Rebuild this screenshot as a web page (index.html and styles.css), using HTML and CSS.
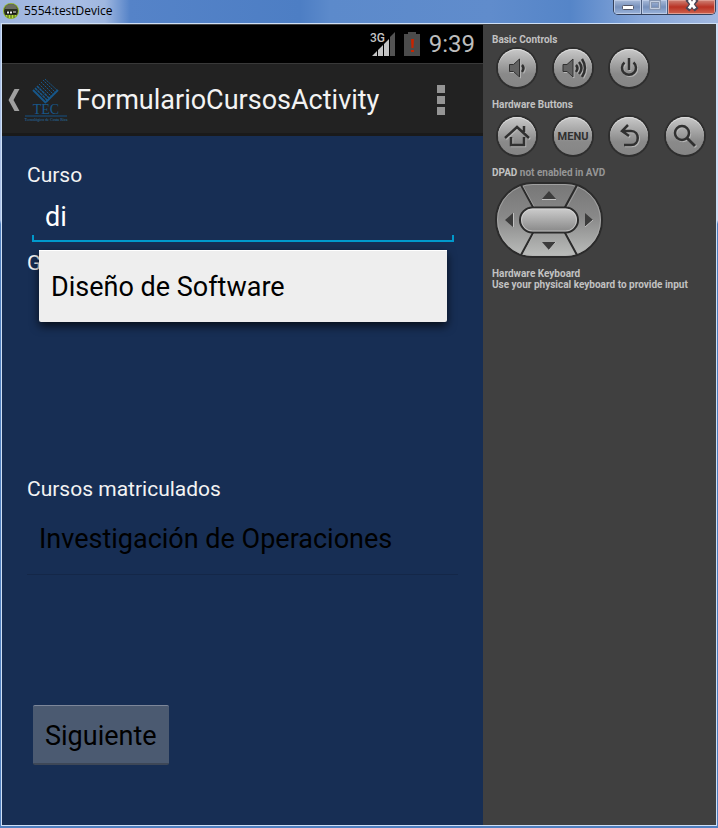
FILE: index.html
```html
<!DOCTYPE html>
<html lang="es">
<head>
<meta charset="utf-8">
<meta name="viewport" content="width=device-width, initial-scale=1">
<title>5554:testDevice</title>
<link rel="stylesheet" href="styles.css">
</head>
<body>
<header class="titlebar">
  <svg class="app-icon" viewBox="0 0 16 16" aria-hidden="true">
    <circle cx="8" cy="8" r="8" fill="#8fb32b"/>
    <circle cx="8" cy="8" r="7" fill="#2a2f20"/>
    <path d="M2 6a6 5 0 0 1 12 0z" fill="#6a6d62"/>
    <path d="M3 8h10v3H3z" fill="#15180f"/>
    <path d="M4 8.500h2v2H4zM7 8.500h2v2H7zM10 8.500h3v1h-3z" fill="#f4f4f4"/>
    <path d="M2.500 12h11l-2 3h-7z" fill="#b5e03a"/>
    <path d="M5 12v3M8 12v3M11 12v3" stroke="#414f17"/>
  </svg>
  <h1 class="window-title">5554:testDevice</h1>
  <div class="window-controls">
    <button class="win-btn minimize" aria-label="Minimizar">
      <svg viewBox="0 0 16 12" aria-hidden="true"><rect x="2.500" y="5.500" width="11" height="4" rx="1" fill="#fff" stroke="#535666"/></svg>
    </button>
    <button class="win-btn maximize" aria-label="Maximizar" disabled>
      <svg viewBox="0 0 16 12" aria-hidden="true"><path d="M3.500 1.500h9v7h-9z" fill="none" stroke="#8796b1" stroke-width="3"/><path d="M3.500 1.500h9v7h-9z" fill="none" stroke="#c3cee0"/></svg>
    </button>
    <button class="win-btn close" aria-label="Cerrar">
      <svg viewBox="0 0 16 12" aria-hidden="true"><path d="M5 1l6 7M11 1L5 8" stroke="#4b4656" stroke-width="5" stroke-linecap="square"/><path d="M5 0l6 8.500M11 0L5 8.500" stroke="#fff" stroke-width="3"/></svg>
    </button>
  </div>
</header>
<main class="window">
  <section class="phone">
    <div class="status-bar">
      <svg class="signal" viewBox="0 0 26 26" aria-hidden="true">
        <path d="M2 25L7 20v5zM8 25v-6l5-5v11zM14 25V13l5-5v17z" fill="#c4c4c4"/>
        <path d="M20 25V6l5-5v24z" fill="#535353"/>
        <text x="0" y="11" class="signal-text">3G</text>
      </svg>
      <svg class="battery" viewBox="0 0 16 24" aria-hidden="true">
        <path d="M0 2h4V0h8v2h4v22H0z" fill="#4b4b4b"/>
        <path d="M7 7h3l-.5 9h-2zM7 18h3v2H7z" fill="#c62400"/>
      </svg>
      <time class="clock">9:39</time>
    </div>
    <div class="action-bar">
      <button class="up" aria-label="Volver">
        <svg class="chevron" viewBox="0 0 12 22" aria-hidden="true"><path d="M11.500 0H6.500L.5 11l6 11h5l-6-11z" fill="#a0a0a0"/></svg>
        <svg class="logo" viewBox="0 0 44 44" aria-hidden="true">
          <g fill="none" stroke="#17578a">
            <path d="M9 12L22 25" stroke-width="2"/>
            <path d="M11 10L24 23M13 8L26 21" stroke-width="1.500" stroke-dasharray="3 .6"/>
            <path d="M15 6L28 19M17 4L30 17M19 2L32 15M21 1L34 13" stroke-dasharray="2 .8"/>
            <path d="M22 24L34 12" stroke-width="2"/>
          </g>
          <text x="22" y="36" class="logo-name">TEC</text>
          <path d="M1 38h42" stroke="#145184"/>
          <text x="22" y="43" class="logo-caption">Tecnológico de Costa Rica</text>
        </svg>
      </button>
      <h2 class="activity-title">FormularioCursosActivity</h2>
      <button class="overflow" aria-label="Más opciones"><i></i><i></i><i></i></button>
    </div>
    <form class="form">
      <label class="label" for="curso">Curso</label>
      <div class="field">
        <input id="curso" class="input" type="text" value="di" autocomplete="off">
        <button type="button" class="suggestion">Diseño de Software</button>
      </div>
      <div class="group">
        <span class="label">G</span>
      </div>
      <h3 class="label">Cursos matriculados</h3>
      <ul class="courses">
        <li class="course">Investigación de Operaciones</li>
      </ul>
      <button type="button" class="next">Siguiente</button>
    </form>
  </section>
  <aside class="controls">
    <h2 class="caption">Basic Controls</h2>
    <div class="keys basic">
      <button class="key" aria-label="Bajar volumen">
        <svg viewBox="0 0 38 38" aria-hidden="true"><path d="M11.500 15.500h4l6-5.500v18l-6-5.500h-4z" class="engrave"/><path d="M24 16q3 3 0 7" class="stroke"/></svg>
      </button>
      <button class="key" aria-label="Subir volumen">
        <svg viewBox="0 0 38 38" aria-hidden="true"><path d="M9 15.500h4l6-5.500v18l-6-5.500H9z" class="engrave"/><path d="M22 16q3 3 0 7M25 13q5 6 0 12M28 10q6 9 0 18" class="stroke"/></svg>
      </button>
      <button class="key" aria-label="Encender">
        <svg viewBox="0 0 38 38" aria-hidden="true"><path d="M14.500 13.500a7 7 0 1 0 9 0M19 9v12" class="stroke"/></svg>
      </button>
    </div>
    <h2 class="caption">Hardware Buttons</h2>
    <div class="keys">
      <button class="key" aria-label="Inicio">
        <svg viewBox="0 0 38 38" aria-hidden="true"><path d="M7 21L19 10l12 11M26 15V9M13 20v8h13v-8" class="stroke"/></svg>
      </button>
      <button class="key key-text">MENU</button>
      <button class="key" aria-label="Atrás">
        <svg viewBox="0 0 38 38" aria-hidden="true"><path d="M18 8l-6 6 7 5M12 14h9c9 0 9 14 0 14h-7" class="stroke"/></svg>
      </button>
      <button class="key" aria-label="Buscar">
        <svg viewBox="0 0 38 38" aria-hidden="true"><circle cx="16" cy="16" r="7" class="stroke"/><path d="M21 21l8 8" class="stroke heavy"/></svg>
      </button>
    </div>
    <h2 class="caption">DPAD <span class="muted">not enabled in AVD</span></h2>
    <svg class="dpad" viewBox="0 0 108 76" role="img" aria-label="DPAD">
      <defs>
        <linearGradient id="pad" x2="0" y2="1"><stop stop-color="#777"/><stop offset=".45" stop-color="#888"/><stop offset="1" stop-color="#bcbebc"/></linearGradient>
        <linearGradient id="center" x2="0" y2="1"><stop stop-color="#cfcfcf"/><stop offset="1" stop-color="#868686"/></linearGradient>
      </defs>
      <rect x="1" y="1" width="106" height="74" rx="37" fill="url(#pad)" stroke="#2b2b2b" stroke-width="2"/>
      <rect x="2.500" y="2.500" width="103" height="71" rx="35.500" fill="none" stroke="#b0b0b0" stroke-opacity=".7"/>
      <path d="M26 3l13 24M82 3L69 27M26 73l13-24M82 73L69 49" stroke="#2b2b2b" stroke-width="2"/>
      <path d="M28 4l12 22M83 5L71 27M28 73l12-23M83 71L71 49" stroke="#b0b0b0" stroke-opacity=".6"/>
      <rect x="25" y="25.500" width="58" height="25" rx="12.500" fill="url(#center)" stroke="#2b2b2b" stroke-width="2"/>
      <rect x="26.500" y="27" width="55" height="22" rx="11" fill="none" stroke="#ddd" stroke-opacity=".6"/>
      <path d="M47 17l7-8 7 8zM47 60l7 8 7-8zM18 31l-8 7 8 7zM90 31l8 7-8 7z" fill="#3c3c3c"/>
      <path d="M47 17.500h14M18.500 31v14M54 68l7-8M90 45l8-7" stroke="#c0c0c0"/>
    </svg>
    <h2 class="caption">Hardware Keyboard</h2>
    <p class="caption">Use your physical keyboard to provide input</p>
  </aside>
</main>
</body>
</html>
```
FILE: styles.css
```css
* {
  box-sizing: border-box;
}

body {
  margin: 0;
  min-height: 100vh;
  display: flex;
  flex-direction: column;
  padding: 0 1px 2px;
  background: linear-gradient(180deg, transparent 220px, #4f7fbf 224px), linear-gradient(90deg, #a9bfe5, #cddcf5);
  font-family: Roboto, "Liberation Sans", sans-serif;
}

button {
  margin: 0;
  padding: 0;
  border: 0;
  background: none;
  color: inherit;
  font: inherit;
}

h1, h2, h3, p, ul {
  margin: 0;
  padding: 0;
  font-weight: 400;
}

.titlebar {
  display: flex;
  align-items: center;
  height: 23px;
  margin: 0 -1px;
  padding: 0 2px 2px 3px;
  background: linear-gradient(90deg, #9db4de 0, #aabfe4 70px, #9fb7e0 105px, #5583c8 130px, #4d7ec4 300px, #5c8acb 330px, #608ccc 490px, #5585c8 570px, #86a6d9 640px, #a2b9e1 100%);
}

.app-icon {
  width: 16px;
  height: 16px;
}

.window-title {
  flex: 1;
  margin-left: 5px;
  font: 12px/20px "Open Sans", "Noto Sans", sans-serif;
  color: #000;
}

.window-controls {
  display: flex;
  align-self: flex-start;
  height: 15px;
  border: 1px solid #34405a;
  border-top: 0;
  border-radius: 0 0 5px 5px;
  overflow: hidden;
}

.win-btn {
  display: flex;
  justify-content: center;
  width: 28px;
  border-right: 1px solid #4c5d7d;
  background: linear-gradient(#a9bbda, #7690bb 50%, #9bb4dc);
  box-shadow: inset 0 0 0 1px #bccbe6;
}

.win-btn svg {
  width: 16px;
  height: 12px;
}

.maximize {
  width: 26px;
}

.close {
  width: 47px;
  border-right: 0;
  background: linear-gradient(#cf8478, #b93324 50%, #d06450);
  box-shadow: inset 0 0 0 1px #df9d91;
}

.window {
  flex: 1;
  display: flex;
  border: 1px solid #cfe0f6;
  background: #404040;
}

.phone {
  flex: 1;
  min-width: 0;
  display: flex;
  flex-direction: column;
  margin-top: 1px;
  background: #172e54;
}

.status-bar {
  display: flex;
  align-items: center;
  justify-content: flex-end;
  height: 38px;
  padding-right: 8px;
  background: #000;
  color: #bdbdbd;
}

.signal {
  width: 26px;
  height: 26px;
  margin-right: 8px;
}

.signal-text {
  font: 500 12px Roboto, sans-serif;
  fill: #c4c4c4;
  stroke: #000;
  stroke-width: 2px;
  paint-order: stroke;
}

.battery {
  width: 16px;
  height: 24px;
  margin-right: 9px;
}

.clock {
  font-size: 24px;
  line-height: 40px;
}

.action-bar {
  display: flex;
  align-items: center;
  height: 73px;
  padding: 0 32px 0 6px;
  border-top: 1px solid #393939;
  background: linear-gradient(#222 69px, #1a1a1a 69px);
  color: #f3f3f3;
}

.up {
  display: flex;
  align-items: center;
}

.chevron {
  width: 12px;
  height: 22px;
  margin-right: 4px;
}

.logo {
  width: 44px;
  height: 44px;
}

.logo-name {
  font: 14px "Liberation Serif", serif;
  fill: #17578a;
  text-anchor: middle;
}

.logo-caption {
  font: 4px "Liberation Serif", serif;
  fill: #2673aa;
  text-anchor: middle;
}

.activity-title {
  flex: 1;
  margin-left: 8px;
  font-size: 27px;
  line-height: 32px;
  white-space: nowrap;
}

.overflow {
  display: grid;
  gap: 3px;
  padding: 0 6px;
}

.overflow i {
  width: 8px;
  height: 8px;
  background: #959595;
}

.form {
  flex: 1;
  display: flex;
  flex-direction: column;
  padding: 26px 25px 60px;
}

.label {
  font-size: 21px;
  line-height: 26px;
  color: #f3f3f3;
}

.field {
  position: relative;
  margin: 0 4px 8px 5px;
}

.input {
  display: block;
  width: 100%;
  height: 54px;
  padding: 4px 13px 0;
  border: 0;
  outline: 0;
  background:
    linear-gradient(#0099cc, #0099cc) left bottom / 2px 7px no-repeat,
    linear-gradient(#0099cc, #0099cc) right bottom / 2px 7px no-repeat,
    linear-gradient(#0099cc, #0099cc) left bottom / 100% 2px no-repeat;
  color: #fff;
  font: 27px/32px Roboto, sans-serif;
}

.suggestion {
  position: absolute;
  top: 100%;
  left: 7px;
  right: 7px;
  height: 72px;
  margin-top: 8px;
  padding: 2px 12px 0;
  border-radius: 0 0 2px 2px;
  background: #eee;
  box-shadow: 0 4px 10px rgba(0, 0, 0, .7), inset 0 1px #fff;
  color: #000;
  font-size: 27px;
  text-align: left;
}

.group {
  min-height: 226px;
}

.courses {
  list-style: none;
}

.course {
  height: 73px;
  padding: 0 12px;
  border-bottom: 1px solid #142748;
  color: #000;
  font-size: 27px;
  line-height: 74px;
}

.next {
  align-self: flex-start;
  height: 60px;
  margin: auto 6px 0;
  padding: 2px 12px 0;
  border-top: 1px solid #7d879a;
  border-bottom: 2px solid #3d4757;
  border-radius: 2px;
  background: #4b5a71;
  color: #000;
  font-size: 27px;
}

.controls {
  flex: 0 0 233px;
  padding: 10px 0 0 9px;
  background: #404040;
}

.caption {
  font-size: 10px;
  font-weight: 700;
  line-height: 11px;
  color: #c2c2c2;
}

.muted {
  color: #969696;
}

.keys {
  display: flex;
  gap: 18px;
  height: 57px;
  margin-left: 6px;
  padding-top: 7px;
}

.basic {
  height: 54px;
  padding-top: 4px;
}

.key {
  flex: none;
  width: 38px;
  height: 38px;
  border-radius: 50%;
  background: linear-gradient(#c8c8c8, #8a8a8a 65%, #858585);
  box-shadow: inset 0 1px #dcdcdc, 0 0 0 2px #2e2e2e;
}

.key svg {
  display: block;
  width: 38px;
  height: 38px;
  filter: drop-shadow(1px 1px 0 #b5b5b5);
}

.stroke {
  fill: none;
  stroke: #303030;
  stroke-width: 2.5px;
}

.heavy {
  stroke-width: 3px;
}

.engrave {
  fill: #626262;
  stroke: #303030;
}

.key-text {
  color: #303030;
  font-size: 11px;
  font-weight: 700;
  text-align: center;
}

.dpad {
  display: block;
  width: 108px;
  height: 76px;
  margin: 4px 0 10px 3px;
}
```
